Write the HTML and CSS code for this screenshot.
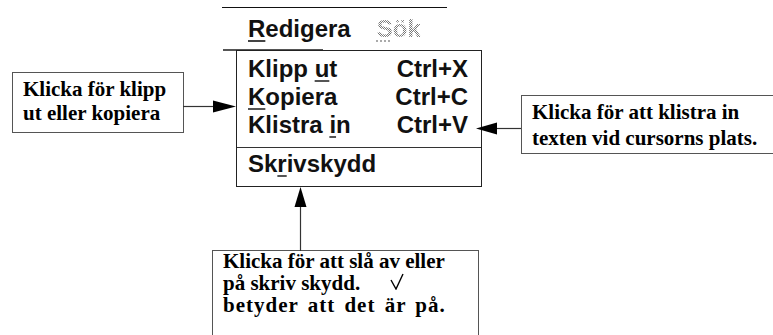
FILE: index.html
```html
<!DOCTYPE html>
<html lang="sv">
<head>
  <meta charset="UTF-8">
  <title>Redigera-menyn</title>
  <link rel="stylesheet" href="styles.css">
</head>
<body>
  <div class="canvas">
    <div class="menubar">
      <span class="title"><u>R</u>edigera</span>
      <span class="title off"><u>S</u>ök</span>
    </div>
    <div class="tabline"></div>

    <div class="menu">
      <div class="group">
        <div class="item"><span>Klipp <u>u</u>t</span><span>Ctrl+X</span></div>
        <div class="item"><span><u>K</u>opiera</span><span>Ctrl+C</span></div>
        <div class="item"><span>Klistra <u>i</u>n</span><span>Ctrl+V</span></div>
      </div>
      <div class="group last">
        <div class="item"><span>Sk<u>r</u>ivskydd</span></div>
      </div>
    </div>

    <div class="note note-left">Klicka för klipp<br>ut eller kopiera</div>
    <div class="note note-right">Klicka för att klistra in<br>texten vid cursorns plats.</div>
    <div class="note note-bottom">
      <div class="txt">
        <div>Klicka för att slå av eller</div>
        <div><span class="l2">på skriv skydd.</span><svg class="check" width="14" height="17" viewBox="0 0 14 17"><path d="M1 7 L6 16 L13 1" fill="none" stroke="#000" stroke-width="1.4"/></svg></div>
        <div class="l3">betyder att det är på.</div>
      </div>
    </div>

    <svg class="arrows" width="773" height="335" viewBox="0 0 773 335">
      <g stroke="#333" stroke-width="1.2">
        <line x1="183" y1="106.5" x2="215" y2="106.5"/>
        <line x1="496" y1="128.5" x2="521" y2="128.5"/>
        <line x1="300.5" y1="205" x2="300.5" y2="251"/>
      </g>
      <g fill="#000">
        <polygon points="213,100.5 236,106.5 213,112.5"/>
        <polygon points="476,128.5 497,122.5 497,134.5"/>
        <polygon points="300.5,187 294.5,207 306.5,207"/>
      </g>
    </svg>
  </div>
</body>
</html>
```

FILE: styles.css
```css
body { margin: 0; background: #fff; }
.canvas { position: relative; width: 773px; height: 335px; overflow: hidden; background: #fff; }

/* menu */
.menubar { position: absolute; left: 222px; top: 7px; width: 199px; border-top: 1px solid #111; padding: 7px 0 0 26px; display: flex; gap: 26px; font: bold 24px/28px "Liberation Sans", Arial, sans-serif; color: #111; }
.title u { text-decoration-thickness: 2px; text-underline-offset: 3px; text-decoration-color: #444; }
.off { color: transparent; background: repeating-conic-gradient(#777 0 25%, #fff 0 50%) 0 0 / 2px 2px; -webkit-background-clip: text; background-clip: text; }
.off u { text-decoration-color: #aaa; text-decoration-style: dotted; }
.tabline { position: absolute; left: 223px; top: 49px; width: 100px; height: 2px; background: #555; }

.menu { position: absolute; left: 236px; top: 50px; width: 244px; border: 1px solid #222; font: bold 24px/28px "Liberation Sans", Arial, sans-serif; color: #111; }
.group { padding: 4px 13px 8px 11px; }
.group.last { border-top: 1px solid #333; padding: 2px 13px 8px 11px; }
.item { display: flex; justify-content: space-between; }
.item u { text-decoration-thickness: 2px; text-underline-offset: 3px; text-decoration-color: #555; }

/* callouts */
.note { position: absolute; border: 1px solid #555; font: bold 21px "Liberation Serif", "Times New Roman", serif; color: #000; white-space: nowrap; }
.note-left { left: 12px; top: 72px; width: 160px; height: 55px; padding: 4px 0 0 10px; line-height: 24px; }
.note-right { left: 521px; top: 95px; width: 260px; height: 54px; padding: 3px 0 0 10px; line-height: 26px; }
.note-bottom { left: 212px; top: 250px; width: 255px; height: 110px; padding: 0 0 0 10px; line-height: 22px; }
.txt { margin-top: -1px; }
.l2 { display: inline-block; width: 167px; }
.l3 { letter-spacing: 1px; word-spacing: 3px; }
.check { vertical-align: 0; }

.arrows { position: absolute; left: 0; top: 0; }
```
